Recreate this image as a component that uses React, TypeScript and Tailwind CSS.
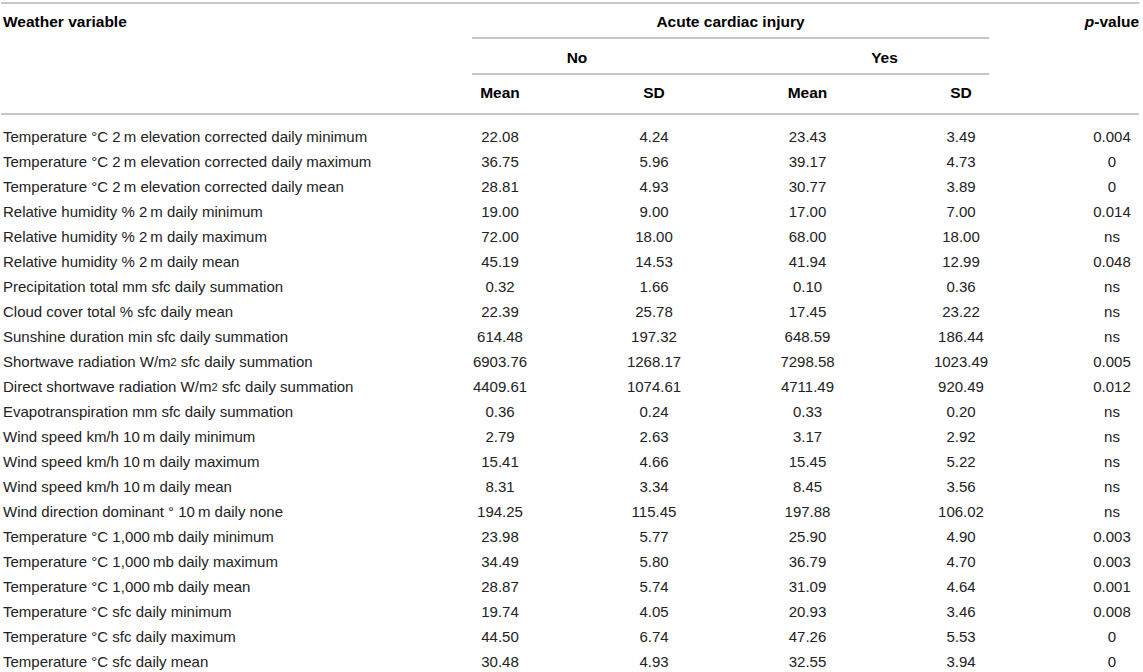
import type { ReactNode } from "react";

type Row = {
  label: ReactNode;
  noMean: string;
  noSd: string;
  yesMean: string;
  yesSd: string;
  p: string;
};

const T = "\u2009"; // thin space used between number and unit

const Sup = () => <sup className="text-[11px] leading-none relative -top-[1px]">2</sup>;

const ROWS: Row[] = [
  { label: `Temperature °C 2${T}m elevation corrected daily minimum`, noMean: "22.08", noSd: "4.24", yesMean: "23.43", yesSd: "3.49", p: "0.004" },
  { label: `Temperature °C 2${T}m elevation corrected daily maximum`, noMean: "36.75", noSd: "5.96", yesMean: "39.17", yesSd: "4.73", p: "0" },
  { label: `Temperature °C 2${T}m elevation corrected daily mean`, noMean: "28.81", noSd: "4.93", yesMean: "30.77", yesSd: "3.89", p: "0" },
  { label: `Relative humidity % 2${T}m daily minimum`, noMean: "19.00", noSd: "9.00", yesMean: "17.00", yesSd: "7.00", p: "0.014" },
  { label: `Relative humidity % 2${T}m daily maximum`, noMean: "72.00", noSd: "18.00", yesMean: "68.00", yesSd: "18.00", p: "ns" },
  { label: `Relative humidity % 2${T}m daily mean`, noMean: "45.19", noSd: "14.53", yesMean: "41.94", yesSd: "12.99", p: "0.048" },
  { label: "Precipitation total mm sfc daily summation", noMean: "0.32", noSd: "1.66", yesMean: "0.10", yesSd: "0.36", p: "ns" },
  { label: "Cloud cover total % sfc daily mean", noMean: "22.39", noSd: "25.78", yesMean: "17.45", yesSd: "23.22", p: "ns" },
  { label: "Sunshine duration min sfc daily summation", noMean: "614.48", noSd: "197.32", yesMean: "648.59", yesSd: "186.44", p: "ns" },
  {
    label: <>Shortwave radiation W/m<Sup /> sfc daily summation</>,
    noMean: "6903.76", noSd: "1268.17", yesMean: "7298.58", yesSd: "1023.49", p: "0.005",
  },
  {
    label: <>Direct shortwave radiation W/m<Sup /> sfc daily summation</>,
    noMean: "4409.61", noSd: "1074.61", yesMean: "4711.49", yesSd: "920.49", p: "0.012",
  },
  { label: "Evapotranspiration mm sfc daily summation", noMean: "0.36", noSd: "0.24", yesMean: "0.33", yesSd: "0.20", p: "ns" },
  { label: `Wind speed km/h 10${T}m daily minimum`, noMean: "2.79", noSd: "2.63", yesMean: "3.17", yesSd: "2.92", p: "ns" },
  { label: `Wind speed km/h 10${T}m daily maximum`, noMean: "15.41", noSd: "4.66", yesMean: "15.45", yesSd: "5.22", p: "ns" },
  { label: `Wind speed km/h 10${T}m daily mean`, noMean: "8.31", noSd: "3.34", yesMean: "8.45", yesSd: "3.56", p: "ns" },
  { label: `Wind direction dominant ° 10${T}m daily none`, noMean: "194.25", noSd: "115.45", yesMean: "197.88", yesSd: "106.02", p: "ns" },
  { label: `Temperature °C 1,000${T}mb daily minimum`, noMean: "23.98", noSd: "5.77", yesMean: "25.90", yesSd: "4.90", p: "0.003" },
  { label: `Temperature °C 1,000${T}mb daily maximum`, noMean: "34.49", noSd: "5.80", yesMean: "36.79", yesSd: "4.70", p: "0.003" },
  { label: `Temperature °C 1,000${T}mb daily mean`, noMean: "28.87", noSd: "5.74", yesMean: "31.09", yesSd: "4.64", p: "0.001" },
  { label: "Temperature °C sfc daily minimum", noMean: "19.74", noSd: "4.05", yesMean: "20.93", yesSd: "3.46", p: "0.008" },
  { label: "Temperature °C sfc daily maximum", noMean: "44.50", noSd: "6.74", yesMean: "47.26", yesSd: "5.53", p: "0" },
  { label: "Temperature °C sfc daily mean", noMean: "30.48", noSd: "4.93", yesMean: "32.55", yesSd: "3.94", p: "0" },
];

// label | No mean | No SD | Yes mean | Yes SD | spacer | p-value
const COLS = "grid grid-cols-[423px_154px_154px_153px_154px_43px_62px]";

export default function App() {
  return (
    <div className="w-[1143px] h-[672px] overflow-hidden bg-white text-[15px] leading-[17px] text-[#222] font-['Liberation_Sans',Arial,sans-serif]">
      {/* top rule */}
      <div className="mt-[2px] ml-[1px] w-[1138px] h-[2px] bg-[#c6c6c6]" />

      {/* header */}
      <div className={`${COLS} grid-rows-[33px_2px_34px_2px_38px] font-bold text-black`}>
        <div className="col-start-1 row-start-1 pl-[3px] pt-[9px] text-[15.5px]">Weather variable</div>
        <div className="col-start-2 col-span-4 row-start-1 pt-[9px] text-center text-[15.5px]">Acute cardiac injury</div>
        <div className="col-start-7 row-start-1 pt-[9px] text-center text-[15.5px]">
          <i>p</i>-value
        </div>

        <div className="col-start-2 col-span-4 row-start-2 mx-[49px] bg-[#c6c6c6]" />

        <div className="col-start-2 col-span-2 row-start-3 pt-[10px] text-center text-[15.5px]">No</div>
        <div className="col-start-4 col-span-2 row-start-3 pt-[10px] text-center text-[15.5px]">Yes</div>

        <div className="col-start-2 col-span-4 row-start-4 mx-[49px] bg-[#c6c6c6]" />

        <div className="col-start-2 row-start-5 pt-[9px] text-center text-[15.5px]">Mean</div>
        <div className="col-start-3 row-start-5 pt-[9px] text-center text-[15.5px]">SD</div>
        <div className="col-start-4 row-start-5 pt-[9px] text-center text-[15.5px]">Mean</div>
        <div className="col-start-5 row-start-5 pt-[9px] text-center text-[15.5px]">SD</div>
      </div>

      {/* header bottom rule */}
      <div className="ml-[1px] w-[1138px] h-[2px] bg-[#c6c6c6]" />

      {/* body */}
      <div className={`${COLS} pt-[9px] auto-rows-[25px] leading-[25px]`}>
        {ROWS.map((r, i) => (
          <div key={i} className="contents">
            <div className="pl-[3px] whitespace-nowrap">{r.label}</div>
            <div className="text-center">{r.noMean}</div>
            <div className="text-center">{r.noSd}</div>
            <div className="text-center">{r.yesMean}</div>
            <div className="text-center">{r.yesSd}</div>
            <div />
            <div className="text-center">{r.p}</div>
          </div>
        ))}
      </div>
    </div>
  );
}
